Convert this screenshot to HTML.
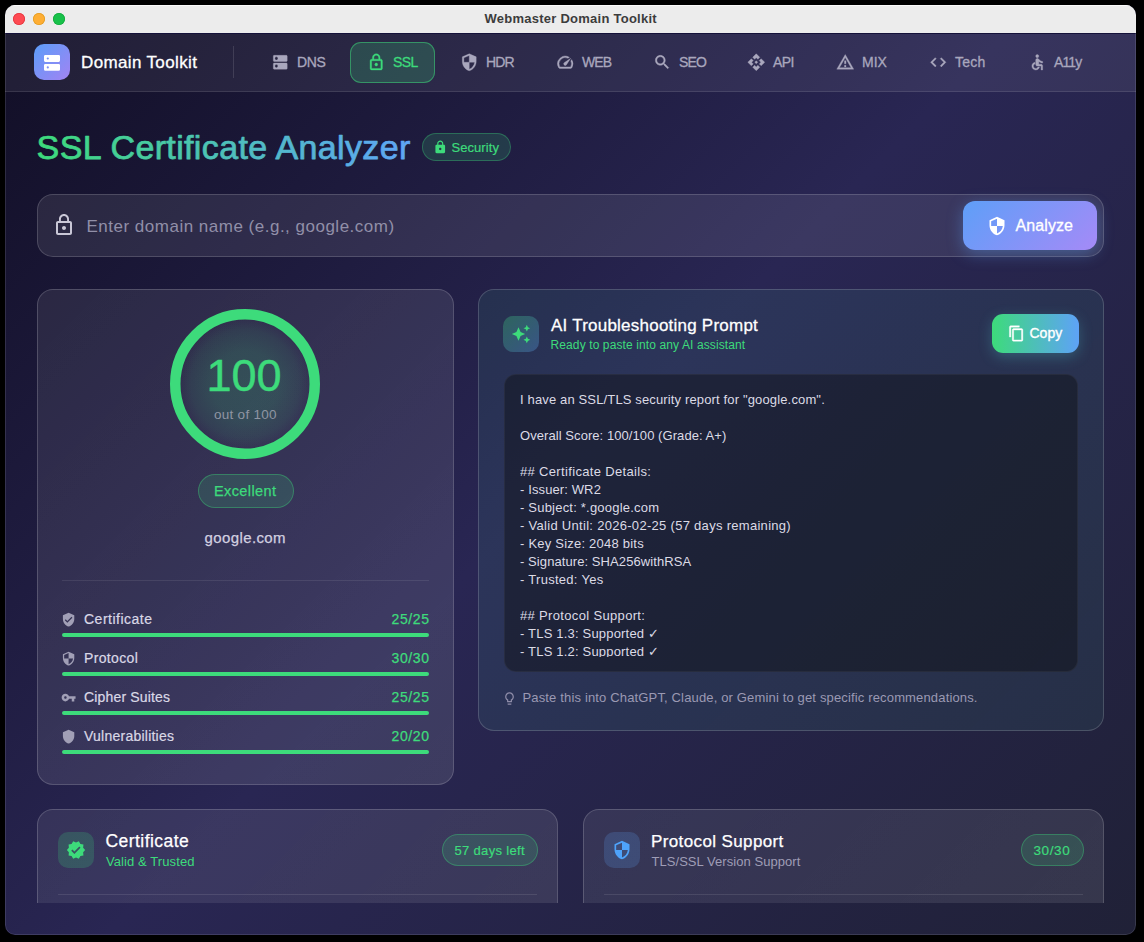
<!DOCTYPE html>
<html lang="en">
<head>
<meta charset="utf-8">
<title>Webmaster Domain Toolkit</title>
<style>
*{box-sizing:border-box;margin:0;padding:0}
html,body{width:1144px;height:942px;overflow:hidden;background:#000}
body{font-family:"Liberation Sans",sans-serif;color:#fff;position:relative;-webkit-font-smoothing:antialiased}
.abs{position:absolute}
.t{position:absolute;white-space:nowrap;line-height:1}
svg{display:block;position:absolute}
#win{position:absolute;left:5px;top:5px;width:1131px;height:930px;border-radius:10px;overflow:hidden;
 background:linear-gradient(135deg,#110e25 0%,#292653 50%,#202137 100%)}
/* everything inside #stage uses page coordinates */
#stage{position:absolute;left:-5px;top:-5px;width:1144px;height:942px}
#titlebar{left:5px;top:5px;width:1131px;height:28px;background:#ececec;border-top:1px solid #fbfbfb}
#titlebar .dot{position:absolute;top:7px;width:12px;height:12px;border-radius:50%}
#tbline{left:5px;top:33px;width:1131px;height:1px;background:#15123a}
#nav{left:5px;top:34px;width:1131px;height:58px;background:rgba(255,255,255,.068);border-bottom:1px solid rgba(255,255,255,.1)}
#winborder{left:5px;top:5px;width:1131px;height:930px;border-radius:10px;border:1px solid rgba(255,255,255,.11);pointer-events:none}
.card{position:absolute;border-radius:16px;border:1px solid rgba(255,255,255,.17);
 background:linear-gradient(135deg,rgba(255,255,255,.08) 0%,rgba(255,255,255,.105) 100%)}
.g{color:#3ddb7b}
.rl{font-size:14px;color:#dad8e6;-webkit-text-stroke:.2px}
.rv{-webkit-text-stroke:.25px;font-size:14px;right:714.400px;letter-spacing:.6px}
.chip{border-radius:16px;background:rgba(61,219,123,.16);border:1px solid rgba(61,219,123,.34)}
.bar{position:absolute;left:62px;width:367px;height:4px;border-radius:2px;background:#3ddb7b}
.navi{position:absolute;top:42px;height:41px;border-radius:11px}
.navi .t{top:13.25px;font-size:14px;color:#a9a7bd;-webkit-text-stroke:.3px}
.navi.on{background:rgba(61,219,123,.2);box-shadow:inset 0 0 0 1px rgba(61,219,123,.5)}
.navi.on .t{color:#3ddb7b}
.navi.on svg{fill:#3ddb7b;stroke:#3ddb7b}
.navi svg{top:11.250px;width:18.500px;height:18.500px;fill:#a9a7bd;stroke:#a9a7bd;stroke-width:.45}
</style>
</head>
<body>
<div id="win"><div id="stage">

<!-- title bar -->
<div id="titlebar" class="abs">
  <div class="dot" style="left:8px;background:#fe4a52;box-shadow:inset 0 0 0 .8px #e2373f"></div>
  <div class="dot" style="left:28px;background:#feae34;box-shadow:inset 0 0 0 .8px #e19d24"></div>
  <div class="dot" style="left:48px;background:#18c14a;box-shadow:inset 0 0 0 .8px #14aa3e"></div>
</div>
<div class="t" id="wtitle" style="left:484.500px;top:12px;font-size:13px;letter-spacing:.25px;font-weight:bold;color:#3c3c3c">Webmaster Domain Toolkit</div>
<div id="tbline" class="abs"></div>

<!-- nav -->
<div id="nav" class="abs"></div>
<div class="abs" id="logo" style="left:34px;top:44px;width:36px;height:36px;border-radius:10px;background:linear-gradient(135deg,#5b9df9 0%,#a283f3 100%)"></div>
<svg viewBox="0 0 16 16" style="left:44px;top:55px;width:16px;height:16px;fill:#fff"><path fill-rule="evenodd" d="M1.3 0h13.400a1.300 1.300 0 0 1 1.300 1.300v4.300a1.300 1.300 0 0 1-1.300 1.300H1.300A1.300 1.300 0 0 1 0 5.600V1.300A1.300 1.300 0 0 1 1.300 0zM3.800 2.400a1.100 1.100 0 1 0 0 2.200a1.100 1.100 0 1 0 0-2.200zM1.300 8.900h13.400a1.300 1.300 0 0 1 1.300 1.300v4.300a1.300 1.300 0 0 1-1.300 1.300H1.300A1.300 1.300 0 0 1 0 14.500v-4.300a1.300 1.300 0 0 1 1.300-1.300zM3.800 11.300a1.100 1.100 0 1 0 0 2.200a1.100 1.100 0 1 0 0-2.200z"/></svg>
<div class="t" id="brand" style="left:81px;top:54.400px;font-size:17px;letter-spacing:.36px;-webkit-text-stroke:.3px #fff;color:#fff">Domain Toolkit</div>
<div class="abs" style="left:233px;top:46px;width:1px;height:32px;background:rgba(255,255,255,.12)"></div>

<div class="navi" style="left:254px;width:88px"><svg viewBox="0 0 24 24" style="left:16.750px"><path d="M20 13H4c-.55 0-1 .45-1 1v6c0 .55.45 1 1 1h16c.55 0 1-.45 1-1v-6c0-.55-.45-1-1-1zM7 19c-1.1 0-2-.9-2-2s.9-2 2-2 2 .9 2 2-.9 2-2 2zM20 3H4c-.55 0-1 .45-1 1v6c0 .55.45 1 1 1h16c.55 0 1-.45 1-1V4c0-.55-.45-1-1-1zM7 9c-1.1 0-2-.9-2-2s.9-2 2-2 2 .9 2 2-.9 2-2 2z"/></svg><div class="t" style="left:43px;letter-spacing:-0.4px">DNS</div></div>
<div class="navi on" style="left:350px;width:85px"><svg viewBox="0 0 24 24" style="left:16.750px"><path d="M12 17c1.1 0 2-.9 2-2s-.9-2-2-2-2 .9-2 2 .9 2 2 2zm6-9h-1V6c0-2.76-2.24-5-5-5S7 3.24 7 6v2H6c-1.1 0-2 .9-2 2v10c0 1.1.9 2 2 2h12c1.1 0 2-.9 2-2V10c0-1.1-.9-2-2-2zM8.9 6c0-1.71 1.39-3.1 3.1-3.1s3.1 1.39 3.1 3.1v2H8.9V6zM18 20H6V10h12v10z"/></svg><div class="t" style="left:43px;letter-spacing:-0.6px">SSL</div></div>
<div class="navi" style="left:443px;width:88px"><svg viewBox="0 0 24 24" style="left:16.750px"><path d="M12 1L3 5v6c0 5.55 3.84 10.74 9 12 5.16-1.26 9-6.45 9-12V5l-9-4zm0 10.990h7c-.53 4.120-3.280 7.790-7 8.940V12H5V6.300l7-3.110v8.800z"/></svg><div class="t" style="left:43px;letter-spacing:-0.8px">HDR</div></div>
<div class="navi" style="left:539px;width:89px"><svg viewBox="0 0 24 24" style="left:16.750px"><path d="M20.380 8.570l-1.230 1.850a8 8 0 0 1-.220 7.580H5.070A8 8 0 0 1 15.580 6.850l1.850-1.230A10 10 0 0 0 3.350 19a2 2 0 0 0 1.720 1h13.850a2 2 0 0 0 1.740-1 10 10 0 0 0-.270-10.440zm-9.790 6.840a2 2 0 0 0 2.830 0l5.660-8.490-8.490 5.660a2 2 0 0 0 0 2.830z"/></svg><div class="t" style="left:43px;letter-spacing:-0.9px">WEB</div></div>
<div class="navi" style="left:636px;width:86px"><svg viewBox="0 0 24 24" style="left:16.750px"><path d="M15.500 14h-.79l-.28-.27C15.410 12.590 16 11.110 16 9.500 16 5.910 13.090 3 9.500 3S3 5.910 3 9.500 5.910 16 9.500 16c1.610 0 3.090-.59 4.230-1.570l.27.28v.79l5 4.990L20.490 19l-4.990-5zm-6 0C7.010 14 5 11.990 5 9.500S7.010 5 9.500 5 14 7.010 14 9.500 11.990 14 9.500 14z"/></svg><div class="t" style="left:43px;letter-spacing:-0.9px">SEO</div></div>
<div class="navi" style="left:730px;width:81px"><svg viewBox="0 0 24 24" style="left:16.750px"><path d="M14 12l-2 2-2-2 2-2 2 2zm-2-6l2.120 2.120 2.500-2.500L12 1 7.380 5.620l2.500 2.500L12 6zm-6 6l2.120-2.120-2.500-2.500L1 12l4.620 4.620 2.500-2.500L6 12zm12 0l-2.120 2.120 2.500 2.500L23 12l-4.620-4.620-2.500 2.500L18 12zm-6 6l-2.120-2.120-2.500 2.500L12 23l4.620-4.620-2.500-2.500L12 18z"/></svg><div class="t" style="left:43px;letter-spacing:-0.6px">API</div></div>
<div class="navi" style="left:819px;width:85px"><svg viewBox="0 0 24 24" style="left:16.750px"><path d="M12 5.990L19.530 19H4.470L12 5.990M12 2L1 21h22L12 2zm1 14h-2v2h2v-2zm0-6h-2v4h2v-4z"/></svg><div class="t" style="left:43px;letter-spacing:0px">MIX</div></div>
<div class="navi" style="left:912px;width:91px"><svg viewBox="0 0 24 24" style="left:16.750px"><path d="M9.400 16.600L4.800 12l4.600-4.600L8 6l-6 6 6 6 1.400-1.400zm5.200 0l4.600-4.600-4.600-4.600L16 6l6 6-6 6-1.400-1.400z"/></svg><div class="t" style="left:43px;letter-spacing:0.2px">Tech</div></div>
<div class="navi" style="left:1011px;width:88px"><svg viewBox="0 0 24 24" style="left:16.750px"><circle cx="12" cy="4" r="2"/><path d="M19 13v-2c-1.540.020-3.090-.750-4.070-1.830l-1.290-1.430c-.17-.19-.38-.34-.61-.45-.01 0-.01-.01-.02-.01H13c-.35-.2-.75-.3-1.190-.26C10.760 7.110 10 8.040 10 9.090V15c0 1.100.9 2 2 2h5v5h2v-5.500c0-1.100-.9-2-2-2h-3v-3.450c1.290 1.070 3.250 1.940 5 1.950zm-6.170 5c-.41 1.160-1.520 2-2.830 2-1.660 0-3-1.340-3-3 0-1.310.84-2.410 2-2.830V12.100c-2.280.46-4 2.480-4 4.900 0 2.760 2.240 5 5 5 2.420 0 4.440-1.720 4.900-4h-2.070z"/></svg><div class="t" style="left:43px;letter-spacing:-0.9px">A11y</div></div>


<!-- heading -->
<svg id="h1svg" width="420" height="60" viewBox="0 0 420 60" style="left:30px;top:120px;overflow:visible"><linearGradient id="hg" gradientUnits="userSpaceOnUse" x1="8" y1="0" x2="380" y2="0"><stop offset="0" stop-color="#3ddb7b"/><stop offset="1" stop-color="#5fa5f8"/></linearGradient><text class="t" id="h1" x="6.600" y="39" font-size="34" letter-spacing=".36" fill="url(#hg)" stroke="url(#hg)" stroke-width=".75" stroke-linejoin="round" style="font-family:'Liberation Sans',sans-serif;position:static">SSL Certificate Analyzer</text></svg>
<div class="abs" id="secbadge" style="left:422px;top:133px;width:89px;height:28px;border-radius:14px;background:rgba(61,219,123,.16);border:1px solid rgba(61,219,123,.32)"></div>
<svg viewBox="0 0 24 24" style="left:432.500px;top:139.600px;width:14.500px;height:14.500px;fill:#3ddb7b"><path d="M18 8h-1V6c0-2.760-2.240-5-5-5S7 3.240 7 6v2H6c-1.100 0-2 .9-2 2v10c0 1.100.9 2 2 2h12c1.100 0 2-.9 2-2V10c0-1.100-.9-2-2-2zm-6 9c-1.100 0-2-.9-2-2s.9-2 2-2 2 .9 2 2-.9 2-2 2zm3.100-9H8.900V6c0-1.710 1.390-3.100 3.100-3.100 1.710 0 3.100 1.390 3.100 3.100v2z"/></svg>
<div class="t g" id="sectxt" style="-webkit-text-stroke:.2px;letter-spacing:.06px;left:451.5px;top:141.1px;font-size:13px">Security</div>

<!-- search -->
<div class="abs" id="search" style="left:37px;top:194px;width:1067px;height:63px;border-radius:16px;background:rgba(255,255,255,.085);border:1px solid rgba(255,255,255,.16)"></div>
<svg viewBox="0 0 24 24" style="left:52px;top:213.400px;width:24px;height:24px;fill:#c9c7d6"><path d="M12 17c1.1 0 2-.9 2-2s-.9-2-2-2-2 .9-2 2 .9 2 2 2zm6-9h-1V6c0-2.760-2.240-5-5-5S7 3.240 7 6v2H6c-1.100 0-2 .9-2 2v10c0 1.100.9 2 2 2h12c1.100 0 2-.9 2-2V10c0-1.100-.9-2-2-2zM8.900 6c0-1.710 1.390-3.100 3.100-3.100s3.100 1.390 3.100 3.100v2H8.900V6zM18 20H6V10h12v10z"/></svg>
<div class="t" id="ph" style="left:86.500px;top:217.600px;font-size:17px;letter-spacing:.5px;color:#918fa8">Enter domain name (e.g., google.com)</div>
<div class="abs" id="abtn" style="left:963px;top:201px;width:134px;height:49px;border-radius:12px;background:linear-gradient(135deg,#5e9ff8 0%,#a58af7 100%);box-shadow:0 4px 16px rgba(96,165,250,.38)"></div>
<svg viewBox="0 0 24 24" style="left:986.5px;top:215.5px;width:20px;height:20px;fill:#fff"><path d="M12 1L3 5v6c0 5.550 3.840 10.740 9 12 5.160-1.260 9-6.450 9-12V5l-9-4zm0 10.990h7c-.53 4.120-3.280 7.790-7 8.940V12H5V6.300l7-3.110v8.800z"/></svg>
<div class="t" id="atxt" style="-webkit-text-stroke:.3px;left:1015.500px;letter-spacing:.1px;top:217.8px;font-size:16px;color:#fff">Analyze</div>

<!-- score card -->
<div class="card" id="scard" style="left:37px;top:289px;width:417px;height:496px"></div>
<svg id="ring" viewBox="0 0 160 160" style="left:165.300px;top:303.700px;width:160px;height:160px">
  <radialGradient id="rg" cx="50%" cy="50%" r="50%"><stop offset="0" stop-color="#3cdb79" stop-opacity=".18"/><stop offset=".46" stop-color="#3cdb79" stop-opacity=".165"/><stop offset=".75" stop-color="#3cdb79" stop-opacity=".09"/><stop offset=".92" stop-color="#3cdb79" stop-opacity="0"/></radialGradient>
  <circle cx="80" cy="80" r="72" fill="url(#rg)"/>
  <circle cx="80" cy="80" r="69.750" fill="none" stroke="#3ddb7b" stroke-width="10.500"/>
</svg>
<div class="t g" id="s100" style="-webkit-text-stroke:.5px;left:206.500px;top:352.8px;font-size:45px">100</div>
<div class="t" id="outof" style="left:214px;top:408.100px;font-size:13.500px;letter-spacing:.27px;color:#8f95a3">out of 100</div>
<div class="abs" id="exc" style="left:197.500px;top:474px;width:96px;height:34px;border-radius:17px;background:rgba(61,219,123,.16);border:1px solid rgba(61,219,123,.36)"></div>
<div class="t g" id="exctxt" style="-webkit-text-stroke:.25px;left:214px;top:484px;font-size:14.500px;letter-spacing:.4px">Excellent</div>
<div class="t" id="dom" style="-webkit-text-stroke:.25px;left:204.500px;top:530.3px;font-size:15px;letter-spacing:.39px;color:#d2d0e0">google.com</div>
<div class="abs" style="left:62px;top:579.500px;width:367px;height:1px;background:rgba(255,255,255,.085)"></div>

<!-- rows -->
<svg viewBox="0 0 24 24" style="left:61.300px;top:612.200px;width:15.200px;height:15.200px;fill:#a19fb6"><path d="M12 1L3 5v6c0 5.550 3.840 10.740 9 12 5.160-1.260 9-6.450 9-12V5l-9-4zm-2 16l-4-4 1.410-1.410L10 14.170l6.590-6.590L18 9l-8 8z"/></svg>
<div class="t rl" style="left:84px;top:611.750px;letter-spacing:.5px">Certificate</div>
<div class="t rv g" style="top:611.750px">25/25</div>
<div class="bar" style="top:633px"></div>

<svg viewBox="0 0 24 24" style="left:61.300px;top:651.200px;width:15.200px;height:15.200px;fill:#a19fb6"><path d="M12 1L3 5v6c0 5.550 3.840 10.740 9 12 5.160-1.260 9-6.450 9-12V5l-9-4zm0 10.990h7c-.53 4.120-3.280 7.790-7 8.940V12H5V6.300l7-3.110v8.800z"/></svg>
<div class="t rl" style="left:84px;top:650.750px;letter-spacing:.36px">Protocol</div>
<div class="t rv g" style="top:650.750px">30/30</div>
<div class="bar" style="top:672px"></div>

<svg viewBox="0 0 24 24" style="left:61.300px;top:690.200px;width:15.200px;height:15.200px;fill:#a19fb6"><path d="M12.650 10C11.830 7.670 9.610 6 7 6c-3.310 0-6 2.690-6 6s2.690 6 6 6c2.610 0 4.830-1.670 5.650-4H17v4h4v-4h2v-4H12.650zM7 14c-1.100 0-2-.9-2-2s.9-2 2-2 2 .9 2 2-.9 2-2 2z"/></svg>
<div class="t rl" style="left:84px;top:689.750px;letter-spacing:.17px">Cipher Suites</div>
<div class="t rv g" style="top:689.750px">25/25</div>
<div class="bar" style="top:711px"></div>

<svg viewBox="0 0 24 24" style="left:61.300px;top:729.200px;width:15.200px;height:15.200px;fill:#a19fb6"><path d="M12 1L3 5v6c0 5.550 3.840 10.740 9 12 5.160-1.260 9-6.450 9-12V5l-9-4z"/></svg>
<div class="t rl" style="left:84px;top:728.750px;letter-spacing:.24px">Vulnerabilities</div>
<div class="t rv g" style="top:728.750px">20/20</div>
<div class="bar" style="top:750px"></div>

<!-- ai card -->
<div class="card" id="aicard" style="left:478px;top:289px;width:626px;height:442px;background:linear-gradient(135deg,rgba(52,211,153,.08) 0%,rgba(60,205,170,.064) 100%),rgba(255,255,255,.012)"></div>
<div class="abs" id="aiico" style="left:503px;top:315.500px;width:36px;height:36px;border-radius:10px;background:linear-gradient(135deg,rgba(61,219,123,.3) 0%,rgba(96,165,250,.3) 100%)"></div>
<svg viewBox="0 0 24 24" style="left:511px;top:323.500px;width:20px;height:20px;fill:#3ddb7b"><path d="M19 9l1.250-2.750L23 5l-2.750-1.250L19 1l-1.250 2.750L15 5l2.750 1.250L19 9zm-7.500.5L9 4 6.500 9.500 1 12l5.500 2.500L9 20l2.500-5.500L17 12l-5.500-2.500zM19 15l-1.250 2.750L15 19l2.750 1.250L19 23l1.250-2.750L23 19l-2.750-1.250L19 15z"/></svg>
<div class="t" id="aititle" style="-webkit-text-stroke:.27px;left:551px;top:317.300px;font-size:17px;letter-spacing:.23px;color:#fff">AI Troubleshooting Prompt</div>
<div class="t g" id="aisub" style="left:550.500px;top:338.900px;font-size:12px;letter-spacing:.11px">Ready to paste into any AI assistant</div>
<div class="abs" id="cbtn" style="left:992px;top:314px;width:87px;height:39px;border-radius:11px;background:linear-gradient(90deg,#3ddb7b 0%,#5ea2f7 100%);box-shadow:0 4px 14px rgba(80,190,200,.3)"></div>
<svg viewBox="0 0 24 24" style="left:1007.600px;top:325.200px;width:17px;height:17px;fill:#fff;stroke:#fff;stroke-width:.5"><path d="M16 1H4c-1.100 0-2 .9-2 2v14h2V3h12V1zm3 4H8c-1.100 0-2 .9-2 2v14c0 1.100.9 2 2 2h11c1.100 0 2-.9 2-2V7c0-1.100-.9-2-2-2zm0 16H8V7h11v14z"/></svg>
<div class="t" id="ctxt" style="-webkit-text-stroke:.35px;left:1029.500px;top:326.400px;font-size:14px;color:#fff">Copy</div>
<div class="abs" id="code" style="left:504px;top:374px;width:574px;height:298px;border-radius:12px;background:rgba(12,11,14,.42);border:1px solid rgba(255,255,255,.05)"></div>
<div class="abs" id="codetxt" style="left:520px;top:391px;width:540px;height:265.500px;overflow:hidden;font-size:13px;line-height:18px;color:#dcdbe6;white-space:pre"><span style="letter-spacing:0.144px">I have an SSL/TLS security report for "google.com".</span>

<span style="letter-spacing:0.067px">Overall Score: 100/100 (Grade: A+)</span>

<span style="letter-spacing:0.336px">## Certificate Details:</span>
<span style="letter-spacing:0.117px">- Issuer: WR2</span>
<span style="letter-spacing:0.209px">- Subject: *.google.com</span>
<span style="letter-spacing:0.295px">- Valid Until: 2026-02-25 (57 days remaining)</span>
<span style="letter-spacing:0.220px">- Key Size: 2048 bits</span>
<span style="letter-spacing:0.080px">- Signature: SHA256withRSA</span>
<span style="letter-spacing:0.285px">- Trusted: Yes</span>

<span style="letter-spacing:0.337px">## Protocol Support:</span>
<span style="letter-spacing:0.190px">- TLS 1.3: Supported ✓</span>
<span style="letter-spacing:0.190px">- TLS 1.2: Supported ✓</span>
- TLS 1.1: Not Supported</div>
<svg viewBox="0 0 24 24" style="left:502.400px;top:691px;width:15px;height:15px;fill:#8e8ca8"><path d="M9 21c0 .55.45 1 1 1h4c.55 0 1-.45 1-1v-1H9v1zm3-19C8.140 2 5 5.140 5 9c0 2.380 1.190 4.470 3 5.740V17c0 .55.45 1 1 1h6c.55 0 1-.45 1-1v-2.260c1.810-1.270 3-3.360 3-5.740 0-3.860-3.140-7-7-7zm2.850 11.100l-.85.6V16h-4v-2.300l-.85-.6C7.800 12.160 7 10.630 7 9c0-2.760 2.240-5 5-5s5 2.240 5 5c0 1.630-.8 3.160-2.150 4.100z"/></svg>
<div class="t" id="hint" style="left:522.500px;top:690.700px;font-size:13px;letter-spacing:.153px;color:#9b99b3">Paste this into ChatGPT, Claude, or Gemini to get specific recommendations.</div>

<!-- bottom cards -->
<div class="abs" id="clip" style="left:0;top:800px;width:1144px;height:103px;overflow:hidden">
 <div class="card" style="left:37px;top:9px;width:521px;height:300px"></div>
 <div class="card" style="left:583px;top:9px;width:521px;height:300px"></div>
 <div class="abs" style="left:58px;top:93.500px;width:479px;height:1px;background:rgba(255,255,255,.1)"></div>
 <div class="abs" style="left:604px;top:93.500px;width:479px;height:1px;background:rgba(255,255,255,.1)"></div>
</div>
<div class="abs" style="left:58px;top:832px;width:36px;height:36px;border-radius:10px;background:rgba(61,219,123,.2)"></div>
<svg viewBox="0 0 24 24" style="left:66px;top:840px;width:20px;height:20px;fill:#3ddb7b"><path d="M23 12l-2.440-2.790.34-3.690-3.610-.82-1.890-3.200L12 2.960 8.600 1.500 6.710 4.690 3.100 5.500l.34 3.700L1 12l2.440 2.790-.34 3.700 3.610.82L8.600 22.500l3.400-1.470 3.400 1.460 1.890-3.190 3.610-.82-.34-3.690L23 12zm-12.910 4.720l-3.800-3.810 1.480-1.480 2.320 2.330 5.850-5.870 1.480 1.480-7.330 7.350z"/></svg>
<div class="t" id="b1t" style="-webkit-text-stroke:.25px;left:105.500px;top:832.500px;font-size:17.500px;letter-spacing:.45px;color:#fff">Certificate</div>
<div class="t g" id="b1s" style="left:106px;top:855.200px;font-size:13px;letter-spacing:.09px">Valid &amp; Trusted</div>
<div class="abs chip" style="left:442px;top:834px;width:95.500px;height:32px"></div>
<div class="t g" id="c1" style="-webkit-text-stroke:.2px;left:454.500px;top:844.100px;font-size:13px;letter-spacing:.33px">57 days left</div>

<div class="abs" style="left:603.500px;top:832px;width:36px;height:36px;border-radius:10px;background:rgba(96,165,250,.2)"></div>
<svg viewBox="0 0 24 24" style="left:611.500px;top:840px;width:20px;height:20px;fill:#4ea3fb"><path d="M12 1L3 5v6c0 5.550 3.840 10.740 9 12 5.160-1.260 9-6.450 9-12V5l-9-4zm0 10.990h7c-.53 4.120-3.280 7.790-7 8.940V12H5V6.300l7-3.110v8.800z"/></svg>
<div class="t" id="b2t" style="-webkit-text-stroke:.25px;left:651px;top:832.800px;font-size:17px;letter-spacing:.38px;color:#fff">Protocol Support</div>
<div class="t" id="b2s" style="left:651.500px;top:855.200px;font-size:13px;letter-spacing:.05px;color:#9f9db6">TLS/SSL Version Support</div>
<div class="abs chip" style="left:1021px;top:834px;width:62.500px;height:32px"></div>
<div class="t g" id="c2" style="-webkit-text-stroke:.2px;left:1033.500px;top:844px;font-size:13.500px;letter-spacing:.6px">30/30</div>

<div id="winborder" class="abs"></div>
</div></div>
</body>
</html>
